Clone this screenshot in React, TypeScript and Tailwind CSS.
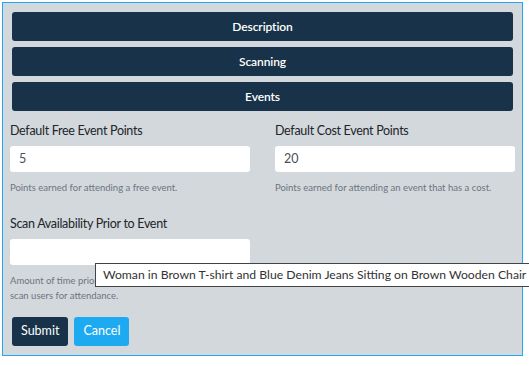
export default function App() {
  const font = { fontFamily: 'Lato, "Noto Sans", sans-serif' };
  return (
    <div className="bg-white w-[529px] h-[366px] p-[2px] overflow-hidden" style={font}>
      <div className="w-[521px] h-[354px] border border-[#20a8f0] bg-[#d3d8dc] px-[7px] pt-[9px]">
        <div className="flex flex-col gap-[6px] px-[2px]">
          {["Description", "Scanning", "Events"].map((t) => (
            <div
              key={t}
              className="h-[29px] rounded-[3px] bg-[#183349] text-white text-[12px] tracking-[-0.1px] font-semibold flex items-center justify-center"
            >
              {t}
            </div>
          ))}
        </div>
        <div className="grid grid-cols-2 gap-x-[25px] mt-[9px] w-[505px]">
          <div>
            <div className="text-[12.5px] tracking-[-0.3px] text-[#212529] h-[22px] leading-[22px]">Default Free Event Points</div>
            <div className="mt-[4px] h-[26px] rounded-[3px] bg-white px-[9px] flex items-center text-[12.5px] text-[#495057]">5</div>
            <div className="mt-[9px] text-[9.5px] text-[#6c757d] leading-[14px]">Points earned for attending a free event.</div>
          </div>
          <div>
            <div className="text-[12.5px] tracking-[-0.3px] text-[#212529] h-[22px] leading-[22px]">Default Cost Event Points</div>
            <div className="mt-[4px] h-[26px] rounded-[3px] bg-white px-[9px] flex items-center text-[12.5px] text-[#495057]">20</div>
            <div className="mt-[9px] text-[9.5px] text-[#6c757d] leading-[14px]">Points earned for attending an event that has a cost.</div>
          </div>
          <div className="mt-[18px]">
            <div className="text-[12.5px] tracking-[-0.3px] text-[#212529] h-[22px] leading-[22px]">Scan Availability Prior to Event</div>
            <div className="mt-[4px] h-[26px] rounded-[3px] bg-white"></div>
            <div className="mt-[8px] text-[9.5px] text-[#6c757d] leading-[15px]">
              Amount of time prior to the event that the host can
              <br />
              scan users for attendance.
            </div>
          </div>
        </div>
        <div className="flex gap-[6px] mt-[14px] px-[2px]">
          <div className="h-[29px] px-[9px] rounded-[3px] bg-[#183349] text-white text-[12.5px] flex items-center">Submit</div>
          <div className="h-[29px] px-[9px] rounded-[3px] bg-[#1eaaf1] text-white text-[12.5px] flex items-center">Cancel</div>
        </div>
      </div>
      <div className="absolute left-[95px] top-[263px] h-[24px] pl-[7px] pr-[7px] bg-white border border-[#444] text-[12.2px] text-[#333] flex items-center whitespace-nowrap">
        Woman in Brown T-shirt and Blue Denim Jeans Sitting on Brown Wooden Chair
      </div>
    </div>
  );
}
